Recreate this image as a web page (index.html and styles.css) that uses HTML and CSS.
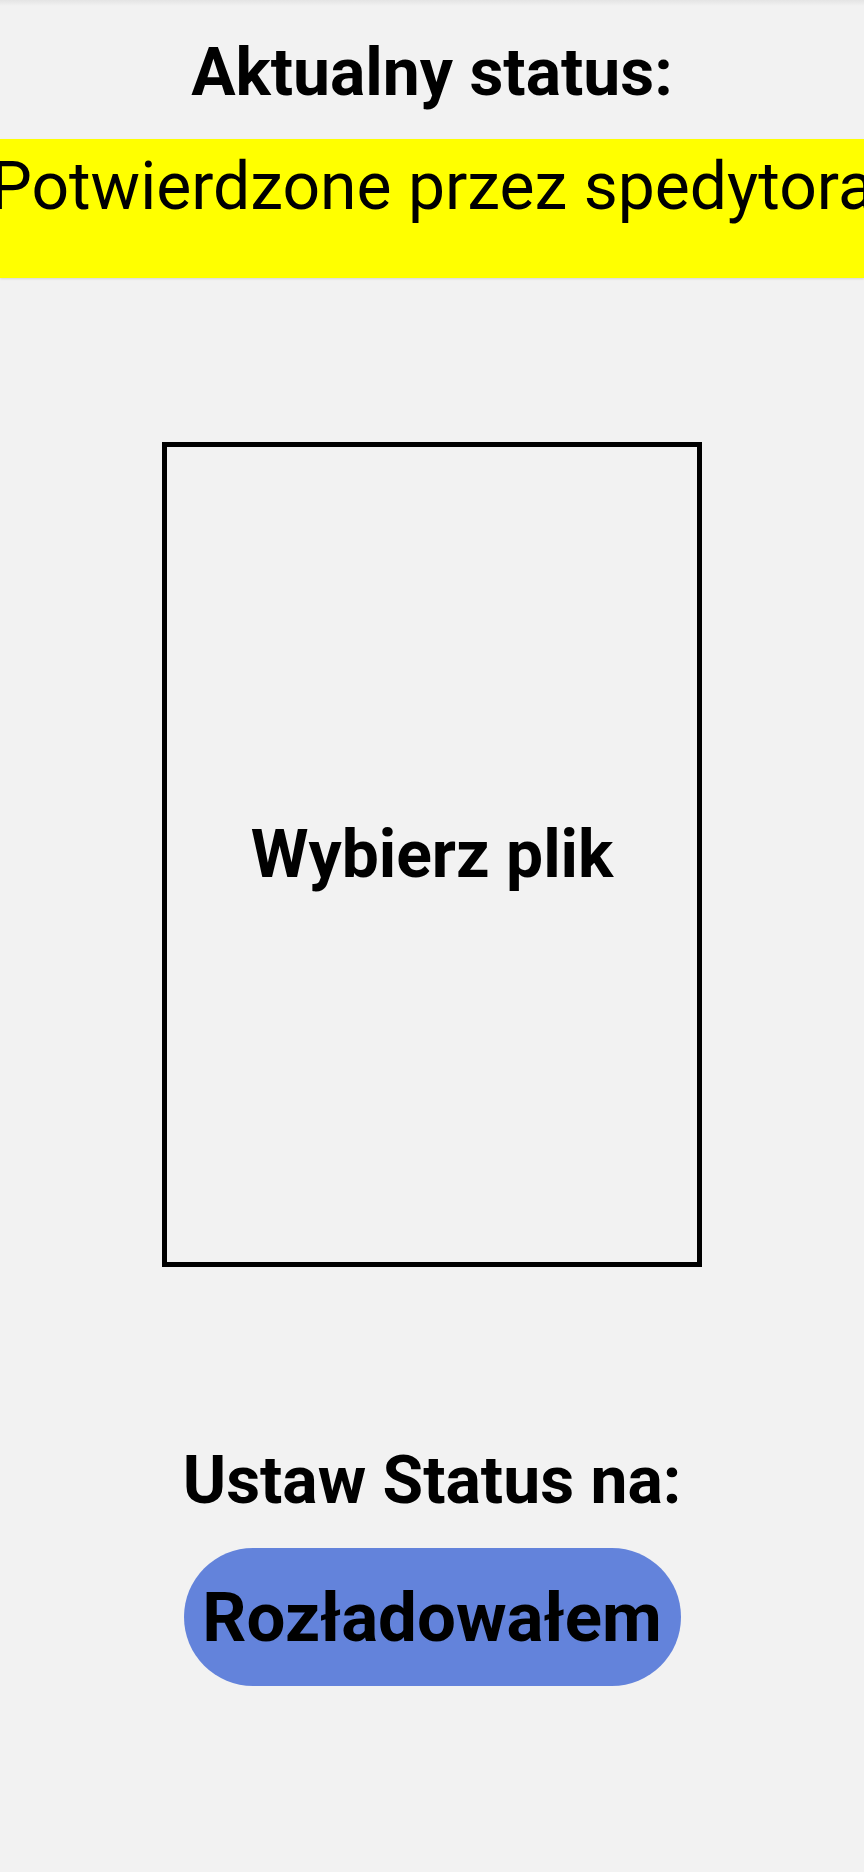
FILE: index.html
```html
<!DOCTYPE html>
<html lang="pl">
<head>
<meta charset="utf-8">
<title>Status</title>
<link rel="stylesheet" href="styles.css">
</head>
<body>
<div class="screen">
  <h1 class="title">Aktualny status:</h1>
  <div class="status-band"><span class="status-text">Potwierdzone przez spedytora</span></div>
  <div class="file-box"><span class="file-label">Wybierz plik</span></div>
  <h2 class="title title-second">Ustaw Status na:</h2>
  <button class="action-btn">Rozładowałem</button>
</div>
</body>
</html>
```
FILE: styles.css
```css
html, body {
  margin: 0;
  padding: 0;
  background: #f2f2f2;
}
body {
  font-family: Roboto, "Noto Sans", "Liberation Sans", sans-serif;
  color: #000;
  overflow-x: hidden;
}
.screen {
  display: flex;
  flex-direction: column;
  align-items: center;
  min-height: 1872px;
  background: linear-gradient(to bottom, #e4e4e4 0px, #f2f2f2 6px);
}
.title {
  margin: 34px 0 0 0;
  font-size: 66px;
  font-weight: 700;
  line-height: 77px;
  text-align: center;
}
.status-band {
  margin-top: 28px;
  width: 100%;
  height: 139px;
  background: #ffff00;
  display: flex;
  justify-content: center;
  overflow: hidden;
  box-shadow: 0 1px 2px rgba(0,0,0,0.12);
}
.status-text {
  flex: none;
  white-space: nowrap;
  font-size: 66px;
  font-weight: 400;
  line-height: 77px;
  padding-top: 9px;
}
.file-box {
  margin-top: 164px;
  width: 540px;
  height: 825px;
  box-sizing: border-box;
  border: 5px solid #000;
  display: flex;
  align-items: center;
  justify-content: center;
}
.file-label {
  font-size: 66px;
  font-weight: 700;
  line-height: 1;
}
.title-second {
  margin-top: 175px;
}
.action-btn {
  margin-top: 29px;
  width: 497px;
  height: 138px;
  border: none;
  border-radius: 69px;
  background: #6383db;
  color: #000;
  font-family: inherit;
  font-size: 69px;
  font-weight: 700;
  padding: 0;
  display: flex;
  align-items: center;
  justify-content: center;
}
```
